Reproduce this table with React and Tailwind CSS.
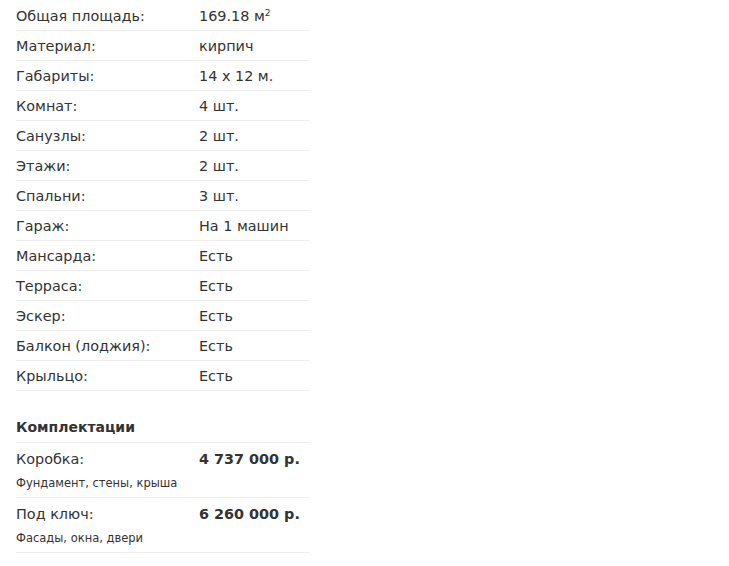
import React from "react";

const specs = [
  ["Общая площадь:", <>169.18 м<span className="text-[9px] align-[5px] leading-none">2</span></>],
  ["Материал:", "кирпич"],
  ["Габариты:", "14 x 12 м."],
  ["Комнат:", "4 шт."],
  ["Санузлы:", "2 шт."],
  ["Этажи:", "2 шт."],
  ["Спальни:", "3 шт."],
  ["Гараж:", "На 1 машин"],
  ["Мансарда:", "Есть"],
  ["Терраса:", "Есть"],
  ["Эскер:", "Есть"],
  ["Балкон (лоджия):", "Есть"],
  ["Крыльцо:", "Есть"],
];

const packages = [
  { name: "Коробка:", price: "4 737 000 р.", note: "Фундамент, стены, крыша" },
  { name: "Под ключ:", price: "6 260 000 р.", note: "Фасады, окна, двери" },
];

const App = () => {
  return (
    <div
      className="bg-white w-[729px] h-[566px] pl-4 pt-[1px] text-[#333]"
      style={{ fontFamily: '"DejaVu Sans", sans-serif' }}
    >
      <div className="w-[294px]">
        {specs.map(([label, value]) => (
          <div
            key={label}
            className="flex items-center h-[30px] pt-[2px] border-b border-[#eee] text-[14.4px]"
          >
            <span className="w-[183px]">{label}</span>
            <span>{value}</span>
          </div>
        ))}
        <h3 className="font-bold text-[14px] leading-[18px] mt-[27px] pb-[6px] border-b border-[#eee]">
          Комплектации
        </h3>
        {packages.map((p) => (
          <div key={p.name} className="border-b border-[#eee] pt-[7px] pb-[7px]">
            <div className="flex items-center text-[14.4px] leading-[18px]">
              <span className="w-[183px]">{p.name}</span>
              <span className="font-bold text-[14.4px]">{p.price}</span>
            </div>
            <div className="text-[11.5px] leading-[14px] mt-[8px]">{p.note}</div>
          </div>
        ))}
      </div>
    </div>
  );
};

export default App;
